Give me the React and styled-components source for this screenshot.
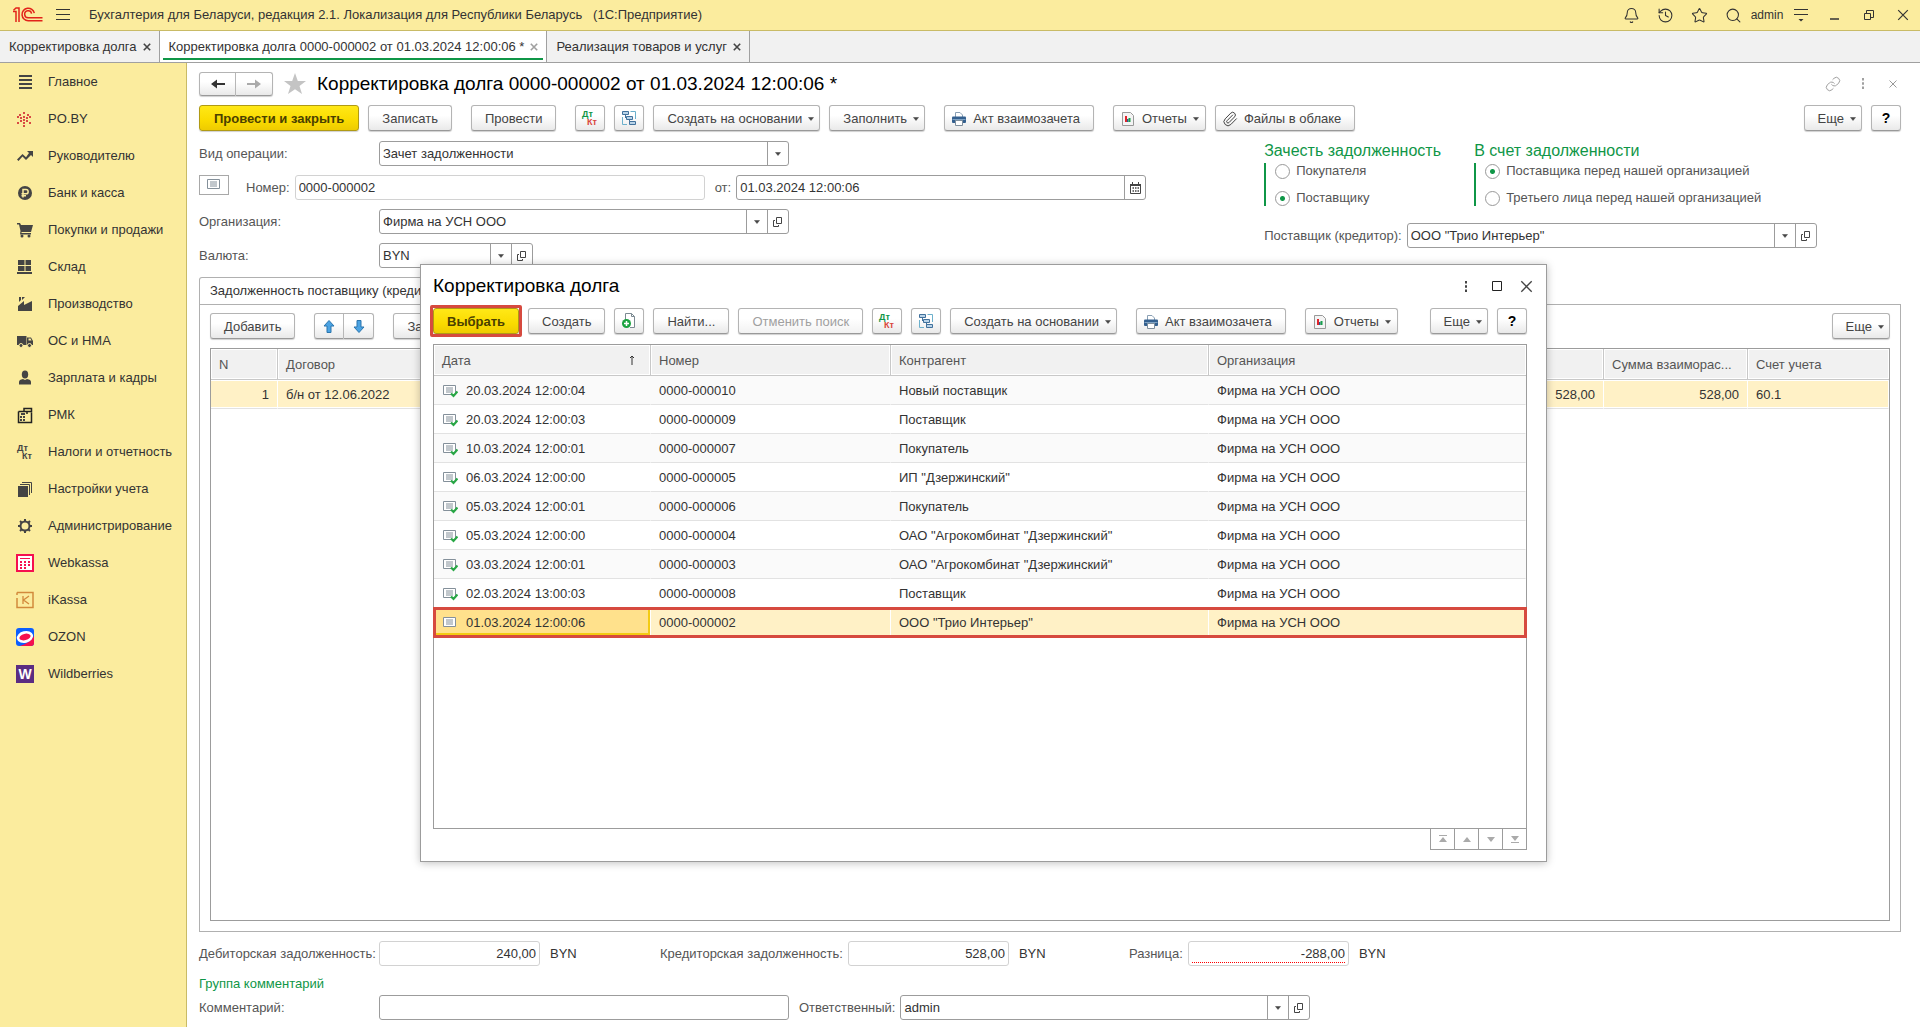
import { useState } from "react";
import styled, { createGlobalStyle } from "styled-components";
import { Bell, History, Link, Paperclip, Search, Star } from "lucide-react";

const GlobalStyle = createGlobalStyle`
  * {
    box-sizing: border-box;
  }
  body {
    margin: 0;
    background: #fff;
    color: #333;
    font-family: "Liberation Sans", Arial, sans-serif;
    font-size: 13px;
    line-height: 16px;
  }
  button, input, select {
    margin: 0;
    font: inherit;
    color: inherit;
  }
  svg {
    display: block;
    flex: none;
  }
`;

const Page = styled.div`
  position: relative;
  display: flex;
  flex-direction: column;
  min-height: 100vh;
`;
const TitleBar = styled.header`
  display: flex;
  align-items: center;
  height: 31px;
  padding-left: 13px;
  background: #fbec9e;
  border-bottom: 1px solid #c9bb66;
`;
const AppTitle = styled.span`
  flex: 1;
  margin-left: 19px;
  white-space: pre;
`;
const BarButton = styled.button`
  display: flex;
  align-items: center;
  justify-content: center;
  width: ${({ $narrow }) => ($narrow ? "14px" : "34px")};
  height: 30px;
  margin-left: ${({ $narrow }) => ($narrow ? "13px" : "0")};
  padding: 0;
  border: 0;
  background: none;
  font-size: 12px;
`;
const TabStrip = styled.nav`
  display: flex;
  height: 32px;
  background: #f1f1f1;
  border-bottom: 1px solid #a0a0a0;
`;
const WindowTab = styled.div`
  display: flex;
  align-items: center;
  gap: 6px;
  position: relative;
  padding: 0 8px 0 9px;
  border-right: 1px solid #a0a0a0;
  background: ${({ $active }) => ($active ? "#fff" : "#f1f1f1")};
  white-space: nowrap;
  &::after {
    content: "";
    display: ${({ $active }) => ($active ? "block" : "none")};
    position: absolute;
    left: 3px;
    right: 3px;
    bottom: 2px;
    height: 2px;
    background: #0f9647;
  }
`;
const TabLink = styled.a`
  color: #333;
  text-decoration: none;
`;
const PlainButton = styled.button`
  display: flex;
  align-items: center;
  justify-content: center;
  padding: 0;
  border: 0;
  background: none;
  color: ${({ $muted }) => ($muted ? "#a0a0a0" : "#444")};
`;
const Body = styled.div`
  display: flex;
  flex: 1;
`;
const Sidebar = styled.nav`
  width: 187px;
  background: #fbec9e;
  border-right: 1px solid #c9bb66;
`;
const SideLink = styled.a`
  display: flex;
  align-items: center;
  gap: 14px;
  height: 37px;
  padding-left: 16px;
  color: #333;
  text-decoration: none;
  white-space: nowrap;
`;
const Main = styled.main`
  display: flex;
  flex: 1;
  flex-direction: column;
  min-width: 0;
  padding: 8px 19px 7px 12px;
`;
const Heading = styled.div`
  display: flex;
  align-items: center;
  height: 25px;
  margin-bottom: 9px;
`;
const Title = styled.h1`
  flex: 1;
  margin: 0;
  color: #000;
  font-size: 19px;
  font-weight: normal;
  line-height: 24px;
  white-space: nowrap;
`;
const HeadingIcons = styled.div`
  display: flex;
  align-items: center;
  gap: 14px;
`;
const Toolbar = styled.div`
  display: flex;
  gap: 19px;
  height: 26px;
  margin-bottom: 10px;
`;
const Group = styled.div`
  display: flex;
  gap: 9px;
  margin-left: ${({ $end }) => ($end ? "auto" : "0")};
`;
const Button = styled.button`
  display: flex;
  align-items: center;
  gap: 7px;
  height: 26px;
  padding: 1px 13px 0;
  border: 1px solid #b4b4b4;
  border-bottom-color: #999;
  border-radius: 3px;
  background: linear-gradient(#fff 40%, #e9e9e9);
  box-shadow: 0 1px 1px #d0d0d0;
  color: #444;
  white-space: nowrap;
  &:disabled {
    color: #a0a0a0;
    background: linear-gradient(#fff 40%, #f2f2f2);
  }
`;
const PrimaryButton = styled(Button)`
  padding: 1px ${({ $wide }) => ($wide ? "14px" : "13px")} 0;
  border-color: #b09a14;
  background: linear-gradient(#ffe817, #fadb00 60%, #eecb00);
  color: #4a4000;
  font-weight: bold;
`;
const IconButton = styled(Button)`
  justify-content: center;
  width: 30px;
  padding: 0;
`;
const MenuButton = styled(Button)`
  gap: 6px;
  padding-right: 5px;
`;
const PictureButton = styled(Button)`
  gap: 6px;
  padding-left: 6px;
  padding-right: ${({ $menu }) => ($menu ? "6px" : "13px")};
`;
const HelpButton = styled(IconButton)`
  color: #000;
  font-size: 14px;
  font-weight: bold;
`;
const Pair = styled.div`
  display: flex;
  ${Button} {
    width: 30px;
    justify-content: center;
    padding: 0;
  }
  ${Button}:first-child {
    border-radius: 3px 0 0 3px;
  }
  ${Button}:last-child {
    border-left: 0;
    border-radius: 0 3px 3px 0;
  }
`;
const HistoryPair = styled(Pair)`
  margin-right: 10px;
  ${Button} {
    width: 37px;
    height: 24px;
  }
`;
const Form = styled.div`
  display: flex;
  gap: 118px;
  margin-bottom: 9px;
`;
const FormColumn = styled.div`
  display: flex;
  flex-direction: column;
  gap: 9px;
`;
const Row = styled.div`
  display: flex;
  align-items: center;
  height: 25px;
`;
const Label = styled.label`
  flex: none;
  width: ${({ $wide }) => ($wide ? "180px" : "auto")};
  margin-right: ${({ $wide }) => ($wide ? "0" : "5px")};
  color: #555;
  white-space: nowrap;
`;
const Box = styled.div`
  display: flex;
  flex: none;
  width: ${({ $size }) => ({ full: "410px", sum: "161px", small: "154px" })[$size]};
  height: 25px;
  border: 1px solid ${({ $readOnly }) => ($readOnly ? "#d2d2d2" : "#9c9c9c")};
  border-radius: 3px;
  background: #fff;
  overflow: hidden;
`;
const Input = styled.input`
  flex: 1;
  min-width: 0;
  padding: 0 3px;
  border: 0;
  outline: 0;
  background: none;
  text-align: ${({ $right }) => ($right ? "right" : "left")};
`;
const Underlined = styled.div`
  display: flex;
  flex: 1;
  min-width: 0;
  margin: 0 3px 2px;
  padding-top: 3px;
  border-bottom: 1px dotted #f00;
  ${Input} {
    padding: 0;
  }
`;
const SelectArea = styled.div`
  display: grid;
  grid-template-columns: 1fr 21px;
  flex: 1;
`;
const Select = styled.select`
  grid-area: 1 / 1 / 2 / 3;
  padding: 0 24px 0 3px;
  border: 0;
  outline: 0;
  appearance: none;
  background: none;
`;
const Arrow = styled.span`
  display: flex;
  grid-area: 1 / 2;
  align-items: center;
  justify-content: center;
  border-left: 1px solid #9c9c9c;
  pointer-events: none;
`;
const FieldButton = styled.button`
  display: flex;
  align-items: center;
  justify-content: center;
  width: 21px;
  padding: 0;
  border: 0;
  border-left: 1px solid #9c9c9c;
  background: none;
`;
const DocBadge = styled.span`
  display: flex;
  align-items: center;
  justify-content: center;
  align-self: flex-start;
  width: 30px;
  height: 20px;
  margin-right: 17px;
  border: 1px solid #a8a8a8;
`;
const Spacer = styled.span`
  width: 10px;
`;
const Choices = styled.div`
  display: flex;
  height: 73px;
`;
const ChoiceGroup = styled.fieldset`
  width: ${({ $fixed }) => ($fixed ? "210px" : "auto")};
  margin: 0;
  padding: 0;
  border: 0;
`;
const Legend = styled.legend`
  height: 22px;
  padding: 0;
  color: #0f9647;
  font-size: 16px;
  line-height: 19px;
  white-space: nowrap;
`;
const ChoiceList = styled.div`
  display: flex;
  flex-direction: column;
  justify-content: space-between;
  height: 43px;
  padding-left: 9px;
  border-left: 2px solid #0f9647;
`;
const Choice = styled.label`
  display: flex;
  align-items: center;
  gap: 6px;
  color: #555;
  white-space: nowrap;
`;
const Radio = styled.input`
  width: 15px;
  height: 15px;
  margin: 0;
  border: 1px solid #999;
  border-radius: 50%;
  appearance: none;
  background: #fff;
  &:checked {
    background: radial-gradient(circle, #0f9647 2px, #fff 3px);
  }
`;
const PageTab = styled.div`
  align-self: flex-start;
  min-width: 270px;
  height: 27px;
  padding: 5px 10px;
  border: 1px solid #b0b0b0;
  border-bottom: 0;
  border-radius: 3px 3px 0 0;
`;
const Panel = styled.section`
  display: flex;
  flex: 1;
  flex-direction: column;
  padding: 8px 10px 10px;
  border: 1px solid #b0b0b0;
`;
const PanelTools = styled(Toolbar)`
  margin-bottom: 9px;
`;
const FillButton = styled(Button)`
  width: 90px;
`;
const TableFrame = styled.div`
  flex: 1;
  border: 1px solid #9c9c9c;
  background: #fff;
`;
const Table = styled.table`
  width: 100%;
  border-spacing: 0;
  table-layout: fixed;
  th,
  td {
    overflow: hidden;
    padding: 1px 8px 0;
    text-align: left;
    text-overflow: ellipsis;
    white-space: nowrap;
  }
  th {
    height: 31px;
    border-right: 1px solid #c8c8c8;
    border-bottom: 1px solid #c8c8c8;
    background: #f1f1f1;
    box-shadow: inset 0 0 0 1px #fff;
    color: #555;
    font-weight: normal;
  }
  td {
    height: 29px;
    border-bottom: 1px solid #e2e2e2;
  }
  th:last-child {
    border-right: 0;
  }
`;
const BodyRow = styled.tr`
  background: ${({ $selected, $even }) => ($selected ? "#fff1c6" : $even ? "#fff" : "#fafafa")};
  outline: ${({ $marked }) => ($marked ? "3px solid #d64a3f" : "none")};
  outline-offset: -2px;
  td {
    border-right: 1px solid ${({ $selected }) => ($selected ? "#fff" : "transparent")};
    box-shadow: ${({ $selected }) => ($selected ? "inset 0 1px #fff, inset 0 -1px #fff" : "none")};
  }
`;
const Cell = styled.td`
  && {
    text-align: ${({ $right }) => ($right ? "right" : "left")};
  }
`;
const Col = styled.col`
  width: ${({ $w }) => $w}px;
`;
const DateCell = styled.td`
  && {
    background: ${({ $current }) => ($current ? "#ffe18c" : "none")};
    box-shadow: ${({ $current }) => ($current ? "inset -2px -3px #f3cb13" : "none")};
  }
`;
const DateLine = styled.span`
  display: flex;
  align-items: center;
  gap: 8px;
`;
const SortHeader = styled.span`
  display: flex;
  justify-content: space-between;
  padding-right: 6px;
`;
const Totals = styled.div`
  display: flex;
  align-items: center;
  height: 25px;
  margin: 9px 0 8px;
`;
const Currency = styled.span`
  width: 120px;
  padding-left: 10px;
`;
const GroupTitle = styled.div`
  height: 21px;
  color: #0f9647;
  line-height: 20px;
`;
const Dialog = styled.section`
  position: absolute;
  top: 264px;
  right: 373px;
  bottom: 165px;
  left: 420px;
  display: flex;
  flex-direction: column;
  padding: 0 19px 11px 12px;
  border: 1px solid #9c9c9c;
  background: #fff;
  box-shadow: 0 1px 8px rgba(0, 0, 0, 0.25);
`;
const DialogHead = styled.div`
  display: flex;
  align-items: center;
  height: 42px;
  margin-bottom: 1px;
`;
const DialogIcons = styled(HeadingIcons)`
  gap: 15px;
  margin-right: -6px;
`;
const Highlight = styled.div`
  position: relative;
  &::after {
    content: "";
    position: absolute;
    inset: -3px;
    border: 3px solid #d64a3f;
    border-radius: 2px;
    pointer-events: none;
  }
`;
const Pager = styled.div`
  display: flex;
  align-self: flex-end;
`;
const PagerButton = styled.button`
  display: flex;
  align-items: center;
  justify-content: center;
  width: 24px;
  height: 21px;
  padding: 0;
  border: 1px solid #9c9c9c;
  border-width: 0 1px 1px 0;
  background: #fff;
  &:first-child {
    width: 25px;
    border-left-width: 1px;
  }
`;

const Logo = () => (
  <svg width="30" height="16" viewBox="0 0 30 16" fill="none" stroke="#e2231a" strokeWidth="1.5">
    <path d="M0 4.5H3V15M0.5 3.2 3 1H6V15" />
    <path d="M21.3 6.2A6.2 6.2 0 1 0 15.2 13.7H29.5" />
    <path d="M18.6 6.6A3.5 3.5 0 1 0 15.2 10.8H29.5" />
  </svg>
);
const Lines = () => (
  <svg width="14" height="12" viewBox="0 0 14 12" stroke="#333">
    <path d="M0 .5H14M0 5.5H14M0 10.5H14" />
  </svg>
);
const Cross = ({ size = 8, width = 2 }) => (
  <svg width={size} height={size} viewBox="0 0 10 10" stroke="currentColor" strokeWidth={width}>
    <path d="M1 1 9 9M9 1 1 9" />
  </svg>
);
const Dots = () => (
  <svg width="16" height="11" viewBox="0 0 16 11" fill="currentColor">
    <path d="M7 0H9V2.500H7ZM7 4.200H9V6.700H7ZM7 8.500H9V11H7Z" />
  </svg>
);
const Down = () => (
  <svg width="6" height="4" viewBox="0 0 6 4" fill="#444">
    <path d="M.5 .5H5.500L3 3.500Z" stroke="#444" strokeWidth=".5" />
  </svg>
);
const Open = () => (
  <svg width="10" height="10" viewBox="0 0 10 10" fill="none" stroke="#444">
    <path d="M3.500 .5H8.500V6.500H3.500ZM2 3.500H.5V9.500H5.500V8" />
  </svg>
);
const Calendar = () => (
  <svg width="11" height="12" viewBox="0 0 11 12" fill="none" stroke="#444">
    <path d="M.5 2.500H10.500V11.500H.5ZM2.500 0V2M8.500 0V2" />
    <path d="M0 3H11" strokeWidth="2" />
    <path d="M2.500 6H9M2.500 9H9" strokeDasharray="1.500 1" strokeWidth="1.500" />
  </svg>
);
const DtKt = ({ top = "#0f9647", bottom = "#d9463c" }) => (
  <svg width="18" height="16" viewBox="0 0 18 16" fontFamily="Liberation Sans" fontSize="9" fontWeight="bold">
    <text x="1" y="7" fill={top}>Дт</text>
    <text x="6" y="15" fill={bottom}>Кт</text>
  </svg>
);
const Structure = () => (
  <svg width="16" height="16" viewBox="0 0 16 16" fill="#b9d3e8" stroke="#41719c">
    <path d="M9.500 1.500H14.500V9M1.500 7V14.500H6" fill="none" stroke="#6cb0cc" />
    <path d="M4.500 5V8M8.500 9V12" fill="none" />
    <path d="M1.500 1.500H7.500V4.500H1.500ZM5.500 6.500H11.500V9.500H5.500ZM8.500 11.500H14.500V14.500H8.500Z" />
  </svg>
);
const Printer = () => (
  <svg width="16" height="16" viewBox="0 0 16 16">
    <path d="M4.500 6V1.500H9L11.500 4V6" fill="#fff" stroke="#8aa0b4" />
    <rect x="1" y="5.500" width="14" height="6.500" rx="1" fill="#34608f" />
    <path d="M1.500 8.500H14.500" stroke="#7fa3c4" />
    <path d="M4.500 9.500H11.500V14.500H4.500Z" fill="#fff" stroke="#7f8f9d" />
  </svg>
);
const Report = () => (
  <svg width="16" height="16" viewBox="0 0 16 16">
    <path d="M2.500 1.500H10.500L13.500 4.500V14.500H2.500Z" fill="#f4f4f4" stroke="#999" />
    <path d="M5 5H7V11H5Z" fill="#e0242c" />
    <path d="M7 8H8.500V11H7Z" fill="#30558f" />
    <path d="M8.500 7H10.500V11H8.500Z" fill="#19a04b" />
  </svg>
);
const NewCopy = () => (
  <svg width="16" height="16" viewBox="0 0 16 16">
    <path d="M4.500 10V.5H10.500L13.500 3.500V14.500H9" fill="#fff" stroke="#7c8a92" />
    <path d="M10.500 .5V3.500H13.500" fill="none" stroke="#7c8a92" />
    <circle cx="5.500" cy="10.500" r="4.500" fill="#1aa23f" />
    <path d="M5.500 8V13M3 10.500H8" stroke="#fff" strokeWidth="1.500" />
  </svg>
);
const BlueArrow = ({ down }) => (
  <svg width="12" height="13" viewBox="0 0 12 13" fill="#4ba3e3" stroke="#2b75ad">
    <path d={down ? "M6 12.500 1 7H4V.5H8V7H11Z" : "M6 .5 1 6H4V12.500H8V6H11Z"} />
  </svg>
);
const NavArrow = ({ forward }) => (
  <svg width="14" height="12" viewBox="0 0 14 12" fill={forward ? "#aaa" : "#333"}>
    <path d={forward ? "M0 5H8V1.500L14 6 8 10.500V7H0Z" : "M14 5H6V1.500L0 6 6 10.500V7H14Z"} />
  </svg>
);
const Doc = ({ posted }) => (
  <svg width="16" height="14" viewBox="0 0 16 14" fill="none">
    <path d="M1.500 1.500H13.500V10.500H1.500Z" fill="#fff" stroke="#84909a" />
    <path d="M4 4H11M4 6H11M4 8H11" stroke="#84909a" />
    {posted && <path d="M9 9.500 11.500 12 15.500 7.500" stroke="#28a745" strokeWidth="2.200" />}
  </svg>
);
const pagerPaths = [
  "M1 0H9V1H1ZM5 2 9 7H1Z",
  "M5 2 9 7H1Z",
  "M5 7 9 2H1Z",
  "M1 7H9V8H1ZM5 6 9 1H1Z",
];

const sideIcons = {
  main: <path d="M3 1H16V3H3ZM3 5H16V7H3ZM3 9H16V11H3ZM3 13H16V15H3Z" />,
  po: (
    <path
      fill="#d84a43"
      d="M7 1H9V3H7ZM3 3H5V5H3ZM11 3H13V5H11ZM7 5H9V7H7ZM1 5H3V7H1ZM13 5H15V7H13ZM4 6H6V8H4ZM10 6H12V8H10ZM7 8H9V10H7ZM1 11H3V13H1ZM4 9H6V11H4ZM10 9H12V11H10ZM13 11H15V13H13ZM7 11H9V13H7ZM7 14H9V16H7Z"
    />
  ),
  manager: <path d="M11 3H17V9L15 7 10 12 6.500 8.500 2.500 13 1 11.500 6.500 6 10 9.300 13 5Z" />,
  bank: (
    <>
      <circle cx="9" cy="8" r="7" />
      <path d="M7 12.500V4.500H10A2 2 0 0 1 10 8.800H5.500M5.500 10.800H10" fill="none" stroke="#fbec9e" strokeWidth="1.500" />
    </>
  ),
  cart: (
    <>
      <path d="M1 1H4L5 3H17L15 10H5.500V11H15V12.500H4L4.500 9 3 2.500H1Z" />
      <circle cx="6" cy="14" r="1.500" />
      <circle cx="13" cy="14" r="1.500" />
    </>
  ),
  stock: <path d="M2 1H8.500V6H2ZM9.500 1H15V6H9.500ZM2 7H8.500V12H2ZM9.500 7H15V12H9.500ZM1 13H16V15H1Z" />,
  factory: <path d="M3 1H5V4L3 6ZM6 1H9L6 4ZM2 15V10L8 5V9L16 5V15Z" />,
  truck: (
    <>
      <path d="M1 3H10.500V12H1ZM11 4.500H15L17 8V12H11Z" />
      <path d="M12.500 5.500H14.500L15.500 7.500H12.500Z" fill="#fbec9e" />
      <circle cx="5" cy="12.500" r="2" stroke="#fbec9e" />
      <circle cx="13.500" cy="12.500" r="2" stroke="#fbec9e" />
    </>
  ),
  person: (
    <>
      <ellipse cx="9" cy="4.500" rx="3.200" ry="4" />
      <path d="M3 14.500V12Q3 9.500 7 9L9 10 11 9Q15 9.500 15 12V14.500Z" />
    </>
  ),
  register: (
    <>
      <path d="M2.500 4.500H8M2.500 4.500V15.500H15.500V5.500M8 1.500H15.500V4.500H8ZM11 4.500V7" fill="none" stroke="#222" strokeWidth="1.500" />
      <path d="M5 6H9V8H5ZM4 9H6V11H4ZM7 9H9V11H7ZM4 12H6V14H4ZM7 12H9V14H7Z" />
    </>
  ),
  books: (
    <>
      <path d="M2 5H12V16H2Z" />
      <path d="M4 3.500H13.500V14M6 1.500H15.500V12" fill="none" stroke="#444" />
    </>
  ),
  gear: (
    <>
      <circle cx="9" cy="8" r="4.500" fill="none" stroke="#444" strokeWidth="2" />
      <path d="M9 1V4M9 12V15M2 8H5M13 8H16M4 3 6 5M12 11 14 13M4 13 6 11M12 5 14 3" stroke="#444" strokeWidth="2" />
    </>
  ),
  webkassa: (
    <>
      <path d="M1 0H17V16H1Z" fill="#fff" stroke="#f5104f" strokeWidth="2" />
      <path d="M4 3H14V4H4ZM4 6H6V8H4ZM8 6H10V8H8ZM12 6H14V8H12ZM4 9H6V11H4ZM8 9H10V11H8ZM12 9H14V11H12ZM4 12H6V14H4ZM8 12H10V14H8Z" fill="#f5104f" />
    </>
  ),
  ikassa: (
    <>
      <path d="M1 3V.5M1 6V15.500H17V.5H1" fill="none" stroke="#d28a3c" strokeWidth="1.500" />
      <path d="M7 4V12M13 4 7.500 8 13 12" fill="none" stroke="#d28a3c" strokeWidth="1.300" />
    </>
  ),
  ozon: (
    <>
      <rect x="0" y="-1" width="18" height="18" rx="3" fill="#0b5fff" />
      <path d="M4 17Q14 14 18 7V14Q18 17 15 17Z" fill="#f5104f" />
      <ellipse cx="9" cy="8" rx="7" ry="4.500" fill="#f5104f" stroke="#fff" strokeWidth="2.600" transform="rotate(-14 9 8)" />
    </>
  ),
  wildberries: (
    <>
      <rect x="0" y="-1" width="18" height="18" fill="#5b2d82" />
      <text x="9" y="13" textAnchor="middle" fill="#fff" fontFamily="Liberation Sans" fontSize="14" fontWeight="bold">
        W
      </text>
    </>
  ),
};
const SideIcon = ({ name }) =>
  name === "taxes" ? (
    <DtKt top="#444" bottom="#444" />
  ) : (
    <svg width="18" height="18" viewBox="0 -1 18 18" fill="#444">
      {sideIcons[name]}
    </svg>
  );

const sections = [
  ["main", "Главное"],
  ["po", "PO.BY"],
  ["manager", "Руководителю"],
  ["bank", "Банк и касса"],
  ["cart", "Покупки и продажи"],
  ["stock", "Склад"],
  ["factory", "Производство"],
  ["truck", "ОС и НМА"],
  ["person", "Зарплата и кадры"],
  ["register", "РМК"],
  ["taxes", "Налоги и отчетность"],
  ["books", "Настройки учета"],
  ["gear", "Администрирование"],
  ["webkassa", "Webkassa"],
  ["ikassa", "iKassa"],
  ["ozon", "OZON"],
  ["wildberries", "Wildberries"],
];
const documents = [
  ["20.03.2024 12:00:04", "0000-000010", "Новый поставщик"],
  ["20.03.2024 12:00:03", "0000-000009", "Поставщик"],
  ["10.03.2024 12:00:01", "0000-000007", "Покупатель"],
  ["06.03.2024 12:00:00", "0000-000005", 'ИП "Дзержинский"'],
  ["05.03.2024 12:00:01", "0000-000006", "Покупатель"],
  ["05.03.2024 12:00:00", "0000-000004", 'ОАО "Агрокомбинат "Дзержинский"'],
  ["03.03.2024 12:00:01", "0000-000003", 'ОАО "Агрокомбинат "Дзержинский"'],
  ["02.03.2024 13:00:03", "0000-000008", "Поставщик"],
  ["01.03.2024 12:00:06", "0000-000002", 'ООО "Трио Интерьер"'],
];

const SelectField = ({ id, value, size = "full", open = true }) => (
  <Box $size={size}>
    <SelectArea>
      <Select id={id}>
        <option>{value}</option>
      </Select>
      <Arrow>
        <Down />
      </Arrow>
    </SelectArea>
    {open && (
      <FieldButton type="button" aria-label="Открыть">
        <Open />
      </FieldButton>
    )}
  </Box>
);

const Total = ({ id, label, value, wide, underline }) => {
  const input = <Input id={id} readOnly defaultValue={value} $right />;
  return (
    <>
      <Label htmlFor={id} $wide={wide}>
        {label}
      </Label>
      <Box $size="sum" $readOnly>
        {underline ? <Underlined>{input}</Underlined> : input}
      </Box>
      <Currency>BYN</Currency>
    </>
  );
};

const MoreButtons = () => (
  <Group $end>
    <MenuButton>
      Еще <Down />
    </MenuButton>
    <HelpButton>?</HelpButton>
  </Group>
);

const RadioGroup = ({ name, title, options, initial, fixed }) => {
  const [value, setValue] = useState(initial);
  return (
    <ChoiceGroup $fixed={fixed}>
      <Legend>{title}</Legend>
      <ChoiceList>
        {options.map((option) => (
          <Choice key={option}>
            <Radio type="radio" name={name} checked={value === option} onChange={() => setValue(option)} />
            {option}
          </Choice>
        ))}
      </ChoiceList>
    </ChoiceGroup>
  );
};

const PickDialog = () => (
  <Dialog role="dialog" aria-labelledby="pick-title">
    <DialogHead>
      <Title as="h2" id="pick-title">
        Корректировка долга
      </Title>
      <DialogIcons>
        <PlainButton aria-label="Меню">
          <Dots />
        </PlainButton>
        <PlainButton aria-label="Развернуть">
          <svg width="16" height="10" viewBox="0 0 16 10" fill="none" stroke="#222">
            <path d="M3.500 .5H12.500V9.500H3.500Z" />
          </svg>
        </PlainButton>
        <PlainButton aria-label="Закрыть">
          <Cross size={13} width={1} />
        </PlainButton>
      </DialogIcons>
    </DialogHead>
    <Toolbar>
      <Group>
        <Highlight>
          <PrimaryButton>Выбрать</PrimaryButton>
        </Highlight>
        <Button>Создать</Button>
        <IconButton aria-label="Скопировать">
          <NewCopy />
        </IconButton>
        <Button>Найти...</Button>
        <Button disabled>Отменить поиск</Button>
        <IconButton>
          <DtKt />
        </IconButton>
        <IconButton aria-label="Структура подчиненности">
          <Structure />
        </IconButton>
        <MenuButton>
          Создать на основании <Down />
        </MenuButton>
      </Group>
      <PictureButton>
        <Printer /> Акт взаимозачета
      </PictureButton>
      <PictureButton $menu>
        <Report /> Отчеты <Down />
      </PictureButton>
      <MoreButtons />
    </Toolbar>
    <TableFrame>
      <Table>
        <colgroup>
          <Col $w={217} />
          <Col $w={240} />
          <Col $w={318} />
          <col />
        </colgroup>
        <thead>
          <tr>
            <th>
              <SortHeader>
                Дата
                <svg width="8" height="14" viewBox="0 0 8 14" fill="none" stroke="#333">
                  <path d="M4 12V3M2 5 4 3 6 5" />
                </svg>
              </SortHeader>
            </th>
            <th>Номер</th>
            <th>Контрагент</th>
            <th>Организация</th>
          </tr>
        </thead>
        <tbody>
          {documents.map(([date, number, partner], index) => {
            const current = number === "0000-000002";
            return (
              <BodyRow key={number} $selected={current} $marked={current} $even={index % 2 === 1}>
                <DateCell $current={current}>
                  <DateLine>
                    <Doc posted={!current} />
                    {date}
                  </DateLine>
                </DateCell>
                <td>{number}</td>
                <td>{partner}</td>
                <td>Фирма на УСН ООО</td>
              </BodyRow>
            );
          })}
        </tbody>
      </Table>
    </TableFrame>
    <Pager>
      {pagerPaths.map((d) => (
        <PagerButton key={d} aria-label="Листать">
          <svg width="10" height="9" viewBox="0 0 10 9" fill="#aaa">
            <path d={d} />
          </svg>
        </PagerButton>
      ))}
    </Pager>
  </Dialog>
);

const App = () => (
  <>
    <GlobalStyle />
    <Page>
      <TitleBar>
        <Logo />
        <BarButton $narrow aria-label="Меню">
          <Lines />
        </BarButton>
        <AppTitle>Бухгалтерия для Беларуси, редакция 2.1. Локализация для Республики Беларусь   (1С:Предприятие)</AppTitle>
        <BarButton aria-label="Уведомления">
          <Bell size={17} strokeWidth={1.5} />
        </BarButton>
        <BarButton aria-label="История">
          <History size={17} strokeWidth={1.5} />
        </BarButton>
        <BarButton aria-label="Избранное">
          <Star size={17} strokeWidth={1.5} />
        </BarButton>
        <BarButton aria-label="Поиск">
          <Search size={17} strokeWidth={1.5} />
        </BarButton>
        <BarButton>admin</BarButton>
        <BarButton aria-label="Настройки">
          <svg width="14" height="16" viewBox="0 0 14 16" stroke="#333">
            <path d="M0 2.500H14M0 7.500H14" />
            <path d="M4.500 12H9.500L7 14.500Z" fill="#333" stroke="none" />
          </svg>
        </BarButton>
        <BarButton aria-label="Свернуть">
          <svg width="10" height="10" viewBox="0 0 10 10" stroke="#333">
            <path d="M0 9H9" strokeWidth="1.500" />
          </svg>
        </BarButton>
        <BarButton aria-label="Восстановить">
          <svg width="10" height="10" viewBox="0 0 10 10" fill="none" stroke="#333">
            <path d="M.5 3.500H6.500V9.500H.5ZM2.500 3V.5H9.500V7.500H7" />
          </svg>
        </BarButton>
        <BarButton aria-label="Закрыть">
          <Cross size={12} width={1} />
        </BarButton>
      </TitleBar>
      <TabStrip>
        <WindowTab>
          <TabLink href="#list">Корректировка долга</TabLink>
          <PlainButton aria-label="Закрыть вкладку">
            <Cross />
          </PlainButton>
        </WindowTab>
        <WindowTab $active>
          <TabLink href="#document">Корректировка долга 0000-000002 от 01.03.2024 12:00:06 *</TabLink>
          <PlainButton $muted aria-label="Закрыть вкладку">
            <Cross />
          </PlainButton>
        </WindowTab>
        <WindowTab>
          <TabLink href="#sales">Реализация товаров и услуг</TabLink>
          <PlainButton aria-label="Закрыть вкладку">
            <Cross />
          </PlainButton>
        </WindowTab>
      </TabStrip>
      <Body>
        <Sidebar>
          {sections.map(([icon, text]) => (
            <SideLink key={icon} href={`#${icon}`}>
              <SideIcon name={icon} />
              {text}
            </SideLink>
          ))}
        </Sidebar>
        <Main>
          <Heading>
            <HistoryPair>
              <Button aria-label="Назад">
                <NavArrow />
              </Button>
              <Button aria-label="Вперед">
                <NavArrow forward />
              </Button>
            </HistoryPair>
            <svg width="34" height="24" viewBox="0 0 34 24" fill="#c4c4c4">
              <path d="M12 1 14.800 9H23L16.500 14 19 22 12 17.200 5 22 7.500 14 1 9H9.200Z" />
            </svg>
            <Title>Корректировка долга 0000-000002 от 01.03.2024 12:00:06 *</Title>
            <HeadingIcons>
              <PlainButton $muted aria-label="Ссылка">
                <Link size={16} strokeWidth={1.5} />
              </PlainButton>
              <PlainButton $muted aria-label="Меню">
                <Dots />
              </PlainButton>
              <PlainButton $muted aria-label="Закрыть">
                <svg width="16" height="8" viewBox="0 0 16 8" stroke="#999">
                  <path d="M4.500 .5 11.500 7.500M11.500 .5 4.500 7.500" />
                </svg>
              </PlainButton>
            </HeadingIcons>
          </Heading>
          <Toolbar>
            <Group>
              <PrimaryButton $wide>Провести и закрыть</PrimaryButton>
              <Button>Записать</Button>
            </Group>
            <Button>Провести</Button>
            <Group>
              <IconButton>
                <DtKt />
              </IconButton>
              <IconButton aria-label="Структура подчиненности">
                <Structure />
              </IconButton>
              <MenuButton>
                Создать на основании <Down />
              </MenuButton>
              <MenuButton>
                Заполнить <Down />
              </MenuButton>
            </Group>
            <PictureButton>
              <Printer /> Акт взаимозачета
            </PictureButton>
            <Group>
              <PictureButton $menu>
                <Report /> Отчеты <Down />
              </PictureButton>
              <PictureButton>
                <Paperclip size={16} strokeWidth={1.5} /> Файлы в облаке
              </PictureButton>
            </Group>
            <MoreButtons />
          </Toolbar>
          <Form>
            <FormColumn>
              <Row>
                <Label htmlFor="operation" $wide>
                  Вид операции:
                </Label>
                <SelectField id="operation" value="Зачет задолженности" open={false} />
              </Row>
              <Row>
                <DocBadge>
                  <Doc />
                </DocBadge>
                <Label htmlFor="number">Номер:</Label>
                <Box $size="full" $readOnly>
                  <Input id="number" defaultValue="0000-000002" />
                </Box>
                <Spacer />
                <Label htmlFor="date">от:</Label>
                <Box $size="full">
                  <Input id="date" defaultValue="01.03.2024 12:00:06" />
                  <FieldButton type="button" aria-label="Календарь">
                    <Calendar />
                  </FieldButton>
                </Box>
              </Row>
              <Row>
                <Label htmlFor="organization" $wide>
                  Организация:
                </Label>
                <SelectField id="organization" value="Фирма на УСН ООО" />
              </Row>
              <Row>
                <Label htmlFor="currency" $wide>
                  Валюта:
                </Label>
                <SelectField id="currency" value="BYN" size="small" />
              </Row>
            </FormColumn>
            <FormColumn>
              <Choices>
                <RadioGroup
                  name="offset"
                  title="Зачесть задолженность"
                  options={["Покупателя", "Поставщику"]}
                  initial="Поставщику"
                  fixed
                />
                <RadioGroup
                  name="against"
                  title="В счет задолженности"
                  options={["Поставщика перед нашей организацией", "Третьего лица перед нашей организацией"]}
                  initial="Поставщика перед нашей организацией"
                />
              </Choices>
              <Row>
                <Label htmlFor="creditor">Поставщик (кредитор):</Label>
                <SelectField id="creditor" value={'ООО "Трио Интерьер"'} />
              </Row>
            </FormColumn>
          </Form>
          <PageTab>Задолженность поставщику (креди</PageTab>
          <Panel>
            <PanelTools>
              <Button>Добавить</Button>
              <Pair>
                <Button aria-label="Вверх">
                  <BlueArrow />
                </Button>
                <Button aria-label="Вниз">
                  <BlueArrow down />
                </Button>
              </Pair>
              <FillButton>За</FillButton>
              <Group $end>
                <MenuButton>
                  Еще <Down />
                </MenuButton>
              </Group>
            </PanelTools>
            <TableFrame>
              <Table>
                <colgroup>
                  <Col $w={67} />
                  <col />
                  <Col $w={160} />
                  <Col $w={144} />
                  <Col $w={141} />
                </colgroup>
                <thead>
                  <tr>
                    <th>N</th>
                    <th>Договор</th>
                    <th />
                    <th>Сумма взаиморас...</th>
                    <th>Счет учета</th>
                  </tr>
                </thead>
                <tbody>
                  <BodyRow $selected>
                    <Cell $right>1</Cell>
                    <Cell>б/н от 12.06.2022</Cell>
                    <Cell $right>528,00</Cell>
                    <Cell $right>528,00</Cell>
                    <Cell>60.1</Cell>
                  </BodyRow>
                </tbody>
              </Table>
            </TableFrame>
          </Panel>
          <Totals>
            <Total id="debit" label="Дебиторская задолженность:" value="240,00" wide />
            <Total id="credit" label="Кредиторская задолженность:" value="528,00" />
            <Total id="difference" label="Разница:" value="-288,00" underline />
          </Totals>
          <GroupTitle>Группа комментарий</GroupTitle>
          <Row>
            <Label htmlFor="comment" $wide>
              Комментарий:
            </Label>
            <Box $size="full">
              <Input id="comment" />
            </Box>
            <Spacer />
            <Label htmlFor="responsible">Ответственный:</Label>
            <SelectField id="responsible" value="admin" />
          </Row>
        </Main>
      </Body>
      <PickDialog />
    </Page>
  </>
);

export default App;
